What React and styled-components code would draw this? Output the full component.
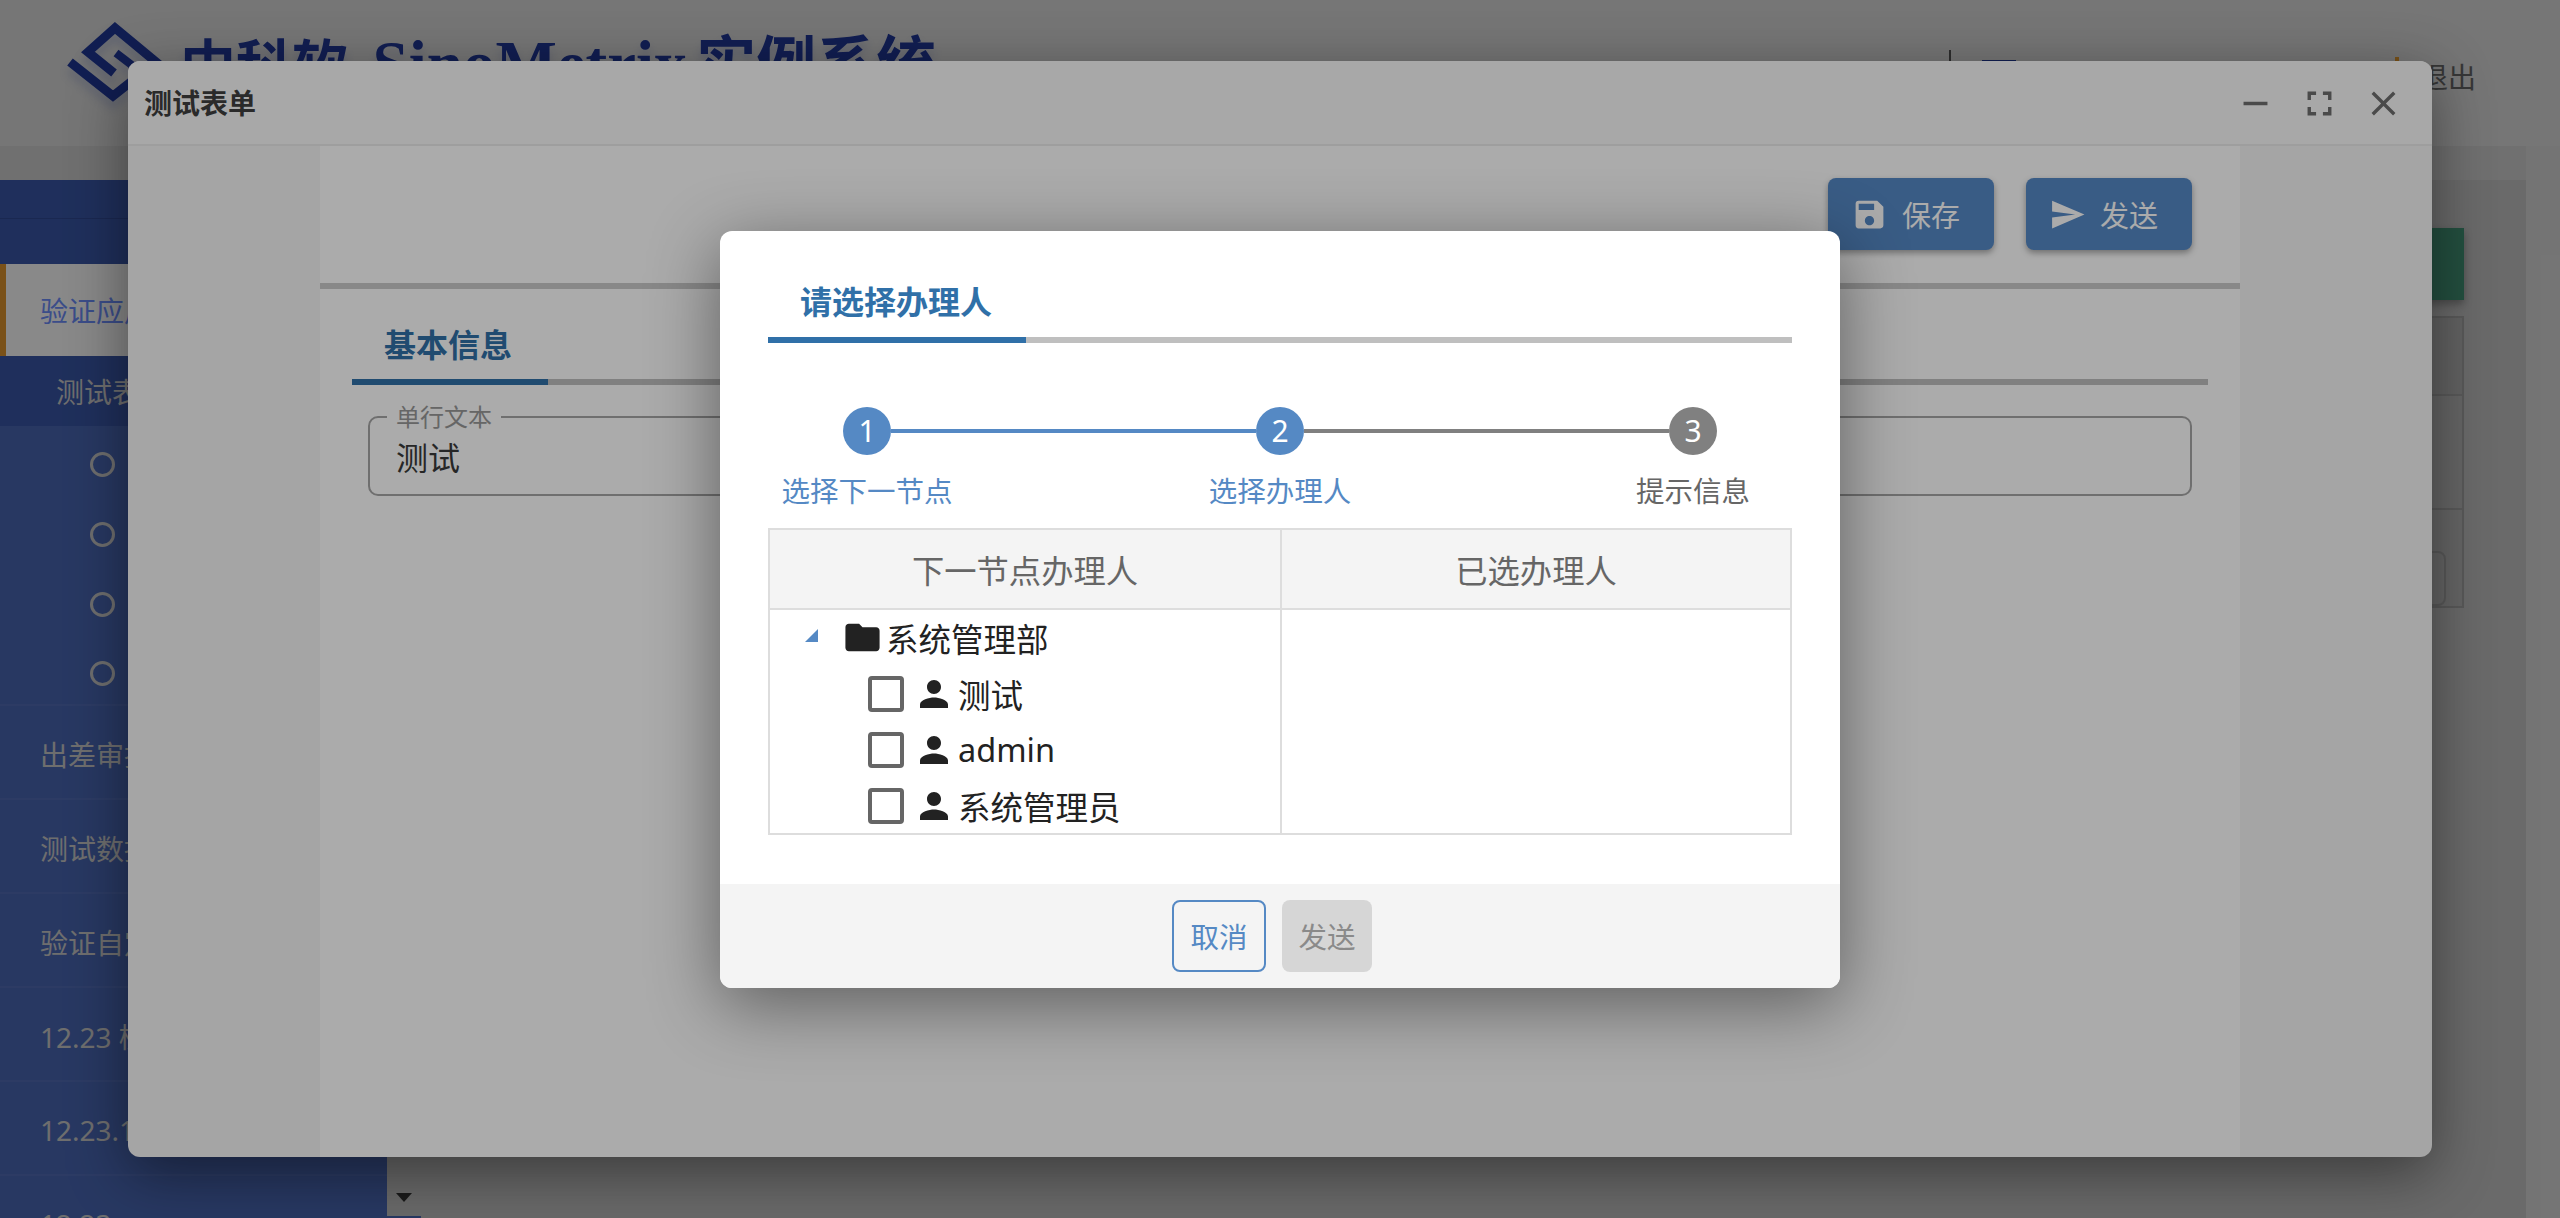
import React from 'react';
import styled, { createGlobalStyle } from 'styled-components';
import { MdClose, MdFolder, MdFullscreen, MdPerson, MdRemove, MdSave, MdSend } from 'react-icons/md';

const FONT = '"Noto Sans", "Noto Sans CJK SC", sans-serif';

const sideRows = ['出差审批', '测试数据', '验证自定义', '12.23 模板', '12.23.1', '12.23'];
const steps = [
  { no: 1, label: '选择下一节点', done: true },
  { no: 2, label: '选择办理人', done: true },
  { no: 3, label: '提示信息', done: false },
];
const people = ['测试', 'admin', '系统管理员'];

function App() {
  return (
    <Page>
      <GlobalStyle />
      <Header>
        <Brand>
          <svg width="104" height="92" viewBox="60 20 104 92" fill="none">
            <path d="M70 62 L113 96 L156 62 L115 28 L88 52 L114 73" stroke="#21399a" strokeWidth="9" strokeLinejoin="miter" />
            <path d="M116 53 L133 66" stroke="#21399a" strokeWidth="8" />
          </svg>
          <BrandText>
            中科软 <BrandLatin>SinoMetrix</BrandLatin> <BrandTail>实例系统</BrandTail>
          </BrandText>
        </Brand>
        <HeaderTools>
          <ToolDivider />
          <ToolIcon />
          <ToolExit />
          <ExitText>退出</ExitText>
        </HeaderTools>
      </Header>

      <Rest>
        <Content>
          <Crumbs />
          <Columns>
            <Sidebar>
              <SideList>
                <SideTop />
                <SideSecond />
                <SideActive>验证应用</SideActive>
                <SideSub>测试表单</SideSub>
                {[0, 1, 2, 3].map((i) => (
                  <SideLeaf key={i} $last={i === 3}>
                    <Radio />
                  </SideLeaf>
                ))}
                {sideRows.map((r) => (
                  <SideRow key={r}>{r}</SideRow>
                ))}
              </SideList>
              <SideScroll>
                <ScrollArrow />
              </SideScroll>
            </Sidebar>
            <Main>
              <GreenButton />
              <BackTable>
                <BackHead />
                <BackRow />
                <BackLast>
                  <BackAction />
                </BackLast>
              </BackTable>
            </Main>
          </Columns>
        </Content>
        <PageScroll />
      </Rest>

      <Overlay $alpha={0.2}>
        <FormWindow>
          <WindowBar>
            <WindowTitle>测试表单</WindowTitle>
            <WindowActions>
              <MdRemove size={41} />
              <MdFullscreen size={41} />
              <MdClose size={41} />
            </WindowActions>
          </WindowBar>
          <WindowBody>
            <FormPanel>
              <FormToolbar>
                <PrimaryButton>
                  <MdSave size={37} />
                  保存
                </PrimaryButton>
                <PrimaryButton>
                  <MdSend size={37} />
                  发送
                </PrimaryButton>
              </FormToolbar>
              <FormSection>
                <SectionTabs>
                  <SectionTab>基本信息</SectionTab>
                </SectionTabs>
                <Field>
                  <FieldLegend>单行文本</FieldLegend>
                  <FieldValue>测试</FieldValue>
                </Field>
              </FormSection>
            </FormPanel>
          </WindowBody>
        </FormWindow>

        <Overlay $alpha={0.33}>
          <Dialog>
            <DialogBody>
              <DialogTabs>
                <DialogTab>请选择办理人</DialogTab>
              </DialogTabs>
              <StepTrack>
                {steps.map((s, i) => (
                  <React.Fragment key={s.no}>
                    <StepDot $on={s.done}>{s.no}</StepDot>
                    {i < steps.length - 1 && <StepLine $on={i === 0} />}
                  </React.Fragment>
                ))}
              </StepTrack>
              <StepLabels>
                {steps.map((s) => (
                  <StepLabel key={s.no} $on={s.done}>
                    {s.label}
                  </StepLabel>
                ))}
              </StepLabels>
              <PickTable>
                <PickHead>下一节点办理人</PickHead>
                <PickHead $right>已选办理人</PickHead>
                <PickCell>
                  <FolderRow>
                    <TreeToggle />
                    <MdFolder size={41} />
                    <span>系统管理部</span>
                  </FolderRow>
                  {people.map((p) => (
                    <PersonRow key={p}>
                      <CheckBox />
                      <MdPerson size={42} />
                      <span>{p}</span>
                    </PersonRow>
                  ))}
                </PickCell>
                <PickCell $right />
              </PickTable>
            </DialogBody>
            <DialogFooter>
              <CancelButton>取消</CancelButton>
              <SendButton>发送</SendButton>
            </DialogFooter>
          </Dialog>
        </Overlay>
      </Overlay>
    </Page>
  );
}

export default App;

const GlobalStyle = createGlobalStyle`
  html, body {
    margin: 0;
    padding: 0;
    overflow: hidden;
  }
  * {
    box-sizing: border-box;
  }
  body {
    font-family: ${FONT};
  }
`;

const Page = styled.div`
  position: relative;
  width: 2560px;
  height: 1218px;
  overflow: hidden;
  display: flex;
  flex-direction: column;
  background: #c6c6c6;
`;

/* page behind the two masks */
const Header = styled.header`
  height: 146px;
  flex-shrink: 0;
  display: flex;
  align-items: center;
  justify-content: space-between;
  padding: 0 84px 0 60px;
  background: #dcdcdc;
`;

const Brand = styled.div`
  display: flex;
  align-items: center;
  gap: 16px;
  margin-bottom: 14px;
  filter: drop-shadow(0 8px 4px rgba(37, 67, 172, 0.18));
`;

const BrandText = styled.div`
  margin-bottom: 6px;
  font-size: 56px;
  line-height: 56px;
  font-weight: 700;
  color: #21399a;
  white-space: nowrap;
`;

const BrandLatin = styled.span`
  margin-left: 10px;
  font-family: "Liberation Serif", serif;
  font-size: 65px;
`;

const BrandTail = styled.span`
  margin-left: -5px;
  font-size: 60px;
`;

const HeaderTools = styled.div`
  display: flex;
  align-items: center;
  margin-top: 8px;
`;

const ToolDivider = styled.div`
  width: 2px;
  height: 54px;
  background: #555;
`;

const ToolIcon = styled.div`
  width: 34px;
  height: 34px;
  margin-left: 31px;
  background: #21399a;
`;

const ToolExit = styled.div`
  width: 4px;
  height: 40px;
  margin-left: 379px;
  background: #e4992d;
`;

const ExitText = styled.div`
  margin-left: 21px;
  font-size: 28px;
  line-height: 40px;
  color: #666;
`;

const Rest = styled.div`
  flex: 1;
  min-height: 0;
  display: flex;
`;

const Content = styled.div`
  flex: 1;
  min-width: 0;
  display: flex;
  flex-direction: column;
`;

const Crumbs = styled.div`
  height: 34px;
  flex-shrink: 0;
  background: #d1d1d1;
`;

const Columns = styled.div`
  flex: 1;
  min-height: 0;
  display: flex;
`;

const Sidebar = styled.aside`
  width: 421px;
  flex-shrink: 0;
  display: flex;
  background: #4c6ab8;
`;

const SideList = styled.div`
  width: 387px;
  overflow: hidden;
`;

const SideTop = styled.div`
  height: 39px;
  background: #3b59ac;
  border-bottom: 1px solid #324c98;
`;

const SideSecond = styled.div`
  height: 45px;
  background: #3b59ac;
`;

const SideActive = styled.div`
  height: 92px;
  display: flex;
  align-items: center;
  padding-left: 34px;
  border-left: 6px solid #e4992d;
  background: #fff;
  color: #6e90ff;
  font-size: 28px;
`;

const SideSub = styled.div`
  height: 70px;
  display: flex;
  align-items: center;
  padding-left: 56px;
  background: #3b59ac;
  color: #cfcfcf;
  font-size: 28px;
`;

const SideLeaf = styled.div`
  height: 70px;
  display: flex;
  align-items: center;
  padding: 6px 0 0 90px;
  border-bottom: ${(p) => (p.$last ? '2px solid #5470bc' : 'none')};
`;

const Radio = styled.span`
  width: 25px;
  height: 25px;
  border: 3px solid #cfcfcf;
  border-radius: 50%;
`;

const SideRow = styled.div`
  height: 94px;
  flex-shrink: 0;
  display: flex;
  align-items: center;
  padding: 4px 0 0 40px;
  border-bottom: 2px solid #5470bc;
  color: #cfcfcf;
  font-size: 28px;
  white-space: nowrap;
`;

const SideScroll = styled.div`
  width: 34px;
  margin-bottom: 2px;
  display: flex;
  align-items: flex-end;
  justify-content: center;
  padding-bottom: 14px;
  background: #c6c6c6;
`;

const ScrollArrow = styled.span`
  border-left: 8px solid transparent;
  border-right: 8px solid transparent;
  border-top: 9px solid #333;
`;

const Main = styled.main`
  flex: 1;
  min-width: 0;
  display: flex;
  flex-direction: column;
  align-items: flex-end;
  gap: 16px;
  padding: 48px 62px 0 40px;
`;

const GreenButton = styled.div`
  width: 180px;
  height: 72px;
  background: #439577;
  box-shadow: 0 4px 8px rgba(0, 0, 0, 0.3);
`;

const BackTable = styled.div`
  width: 100%;
  display: flex;
  flex-direction: column;
  border: 2px solid #a8a8a8;
  background: #bebebe;
`;

const BackHead = styled.div`
  height: 78px;
  background: #b8b8b8;
  border-bottom: 2px solid #a8a8a8;
`;

const BackRow = styled.div`
  height: 114px;
  border-bottom: 2px solid #a8a8a8;
`;

const BackLast = styled.div`
  height: 96px;
  display: flex;
  justify-content: flex-end;
  padding: 41px 16px 0 0;
`;

const BackAction = styled.div`
  width: 120px;
  height: 55px;
  border: 2px solid #a8a8a8;
  border-radius: 8px;
`;

const PageScroll = styled.div`
  width: 34px;
  flex-shrink: 0;
  background: #dadada;
`;

/* masks */
const Overlay = styled.div`
  position: absolute;
  inset: 0;
  display: flex;
  align-items: center;
  justify-content: center;
  background: rgba(0, 0, 0, ${(p) => p.$alpha});
`;

/* form window */
const FormWindow = styled.section`
  width: 2304px;
  height: 1096px;
  display: flex;
  flex-direction: column;
  overflow: hidden;
  border-radius: 12px;
  background: #f6f6f6;
  box-shadow: 0 16px 60px rgba(0, 0, 0, 0.45);
`;

const WindowBar = styled.div`
  height: 85px;
  flex-shrink: 0;
  display: flex;
  align-items: center;
  justify-content: space-between;
  padding: 0 28px 0 16px;
  border-bottom: 2px solid #ececec;
  background: #fbfbfb;
`;

const WindowTitle = styled.div`
  margin-bottom: 2px;
  font-size: 28px;
  font-weight: 700;
  color: #3f3f3f;
`;

const WindowActions = styled.div`
  display: flex;
  gap: 23px;
  margin-top: 2px;
  color: #6f6f6f;
`;

const WindowBody = styled.div`
  flex: 1;
  display: flex;
  justify-content: center;
`;

const FormPanel = styled.div`
  width: 1920px;
  background: #fff;
`;

const FormToolbar = styled.div`
  display: flex;
  justify-content: flex-end;
  gap: 32px;
  padding: 32px 48px 33px 0;
  border-bottom: 6px solid #cbcbcb;
`;

const PrimaryButton = styled.button`
  height: 72px;
  display: flex;
  align-items: center;
  gap: 14px;
  padding: 0 34px 0 23px;
  border: none;
  border-radius: 8px;
  background: #5589c7;
  color: #fff;
  font-family: ${FONT};
  font-size: 29px;
  box-shadow: 0 3px 6px rgba(0, 0, 0, 0.35);
`;

const FormSection = styled.div`
  padding: 0 32px;
`;

const SectionTabs = styled.div`
  display: flex;
  border-bottom: 6px solid #bfbfbf;
`;

const SectionTab = styled.div`
  height: 96px;
  display: flex;
  align-items: center;
  margin-bottom: -6px;
  padding: 18px 36px 0 32px;
  border-bottom: 6px solid #3070a8;
  color: #3070a8;
  font-size: 32px;
  font-weight: 700;
`;

const Field = styled.fieldset`
  margin: 18px 16px 0;
  padding: 0 0 9px;
  min-width: 0;
  border: 2px solid #a6a6a6;
  border-radius: 10px;
`;

const FieldLegend = styled.legend`
  margin-left: 17px;
  padding: 0 9px;
  font-size: 24px;
  line-height: 28px;
  color: #999;
`;

const FieldValue = styled.div`
  padding-left: 26px;
  font-size: 32px;
  line-height: 54px;
  color: #3a3a3a;
`;

/* dialog */
const Dialog = styled.section`
  width: 1120px;
  overflow: hidden;
  border-radius: 12px;
  background: #fff;
  box-shadow: 0 16px 70px rgba(0, 0, 0, 0.45);
`;

const DialogBody = styled.div`
  padding: 48px 48px 49px;
`;

const DialogTabs = styled.div`
  display: flex;
  border-bottom: 6px solid #bfbfbf;
`;

const DialogTab = styled.div`
  height: 64px;
  margin-bottom: -6px;
  padding: 0 34px 0 32px;
  border-bottom: 6px solid #3070a8;
  color: #3070a8;
  font-size: 32px;
  font-weight: 700;
  line-height: 46px;
`;

const StepTrack = styled.div`
  display: flex;
  align-items: center;
  margin-top: 64px;
  padding: 0 75px;
`;

const StepDot = styled.div`
  width: 48px;
  height: 48px;
  flex-shrink: 0;
  display: flex;
  align-items: center;
  justify-content: center;
  border-radius: 50%;
  background: ${(p) => (p.$on ? '#5589c4' : '#808080')};
  color: #fff;
  font-size: 30px;
`;

const StepLine = styled.div`
  flex: 1;
  height: 4px;
  background: ${(p) => (p.$on ? '#5589c4' : '#808080')};
`;

const StepLabels = styled.div`
  display: flex;
  justify-content: space-between;
  margin-top: 16px;
`;

const StepLabel = styled.div`
  width: 198px;
  text-align: center;
  font-size: 28.5px;
  line-height: 40px;
  white-space: nowrap;
  color: ${(p) => (p.$on ? '#5589c4' : '#666')};
`;

const PickTable = styled.div`
  height: 307px;
  margin-top: 17px;
  display: grid;
  grid-template-columns: 1fr 1fr;
  grid-template-rows: 80px 1fr;
  overflow: hidden;
  border: 2px solid #ddd;
`;

const PickHead = styled.div`
  display: flex;
  align-items: center;
  justify-content: center;
  border-bottom: 2px solid #ddd;
  border-left: ${(p) => (p.$right ? '2px solid #ddd' : 'none')};
  background: #f4f4f4;
  color: #666;
  font-size: 32.3px;
`;

const PickCell = styled.div`
  min-height: 0;
  overflow: hidden;
  border-left: ${(p) => (p.$right ? '2px solid #ddd' : 'none')};
`;

const TreeRow = styled.div`
  height: 56px;
  display: flex;
  align-items: center;
  color: #222;
  font-size: 32.5px;
  white-space: nowrap;
`;

const FolderRow = styled(TreeRow)`
  padding-left: 35px;
  gap: 3px;
`;

const TreeToggle = styled.span`
  width: 13px;
  height: 13px;
  margin: 0 21px 4px 0;
  background: #5589c4;
  clip-path: polygon(100% 0, 100% 100%, 0 100%);
`;

const PersonRow = styled(TreeRow)`
  padding-left: 98px;
  gap: 3px;
`;

const CheckBox = styled.span`
  width: 36px;
  height: 36px;
  margin-right: 6px;
  border: 4px solid #666;
  border-radius: 4px;
`;

const DialogFooter = styled.div`
  height: 104px;
  display: flex;
  justify-content: center;
  gap: 16px;
  padding: 16px 16px 0 0;
  background: #f4f4f4;
`;

const CancelButton = styled.button`
  width: 94px;
  height: 72px;
  border: 2px solid #5589c4;
  border-radius: 8px;
  background: transparent;
  color: #5589c4;
  font-family: ${FONT};
  font-size: 28.5px;
`;

const SendButton = styled.button`
  width: 90px;
  height: 72px;
  border: none;
  border-radius: 8px;
  background: #d6d6d6;
  color: #8a8a8a;
  font-family: ${FONT};
  font-size: 28.5px;
`;
